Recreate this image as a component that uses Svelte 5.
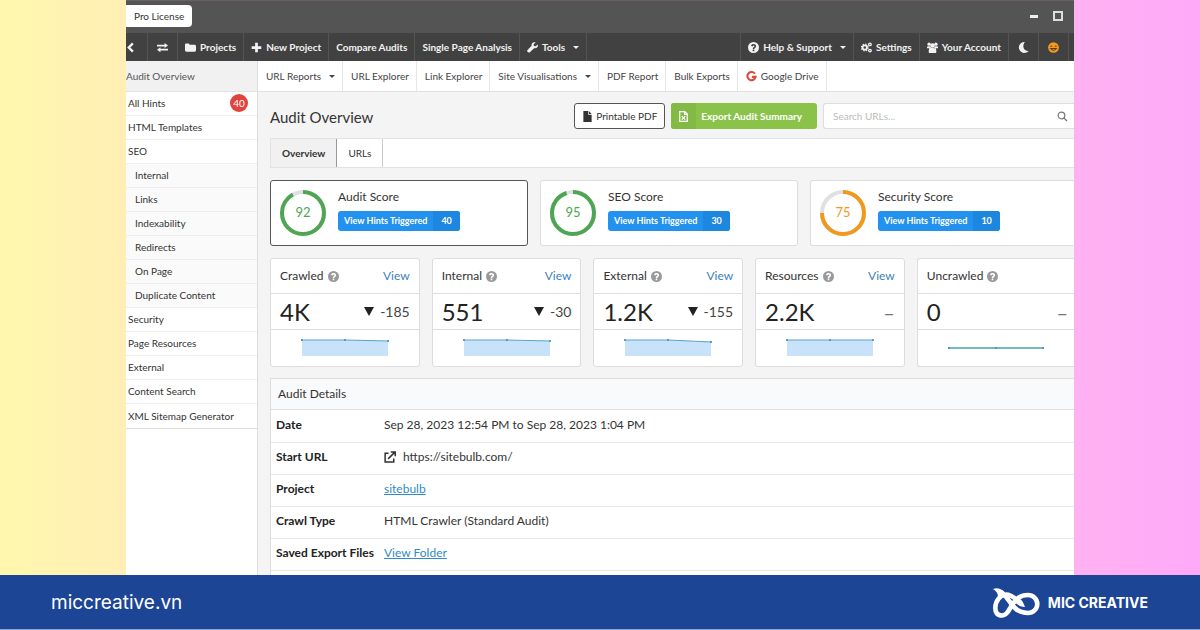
<script lang="ts">
	type Item = { label: string; icon?: string; caret?: boolean };

	const menu: Item[] = [
		{ label: 'Projects', icon: 'folder' },
		{ label: 'New Project', icon: 'plus' },
		{ label: 'Compare Audits' },
		{ label: 'Single Page Analysis' },
		{ label: 'Tools', icon: 'wrench', caret: true }
	];

	const userMenu: Item[] = [
		{ label: 'Help & Support', icon: 'help', caret: true },
		{ label: 'Settings', icon: 'cogs' },
		{ label: 'Your Account', icon: 'users' }
	];

	const reports: Item[] = [
		{ label: 'URL Reports', caret: true },
		{ label: 'URL Explorer' },
		{ label: 'Link Explorer' },
		{ label: 'Site Visualisations', caret: true },
		{ label: 'PDF Report' },
		{ label: 'Bulk Exports' },
		{ label: 'Google Drive', icon: 'google' }
	];

	const sidebar = [
		{ label: 'All Hints', count: 40 },
		{ label: 'HTML Templates' },
		{ label: 'SEO' },
		{ label: 'Internal', sub: true },
		{ label: 'Links', sub: true },
		{ label: 'Indexability', sub: true },
		{ label: 'Redirects', sub: true },
		{ label: 'On Page', sub: true },
		{ label: 'Duplicate Content', sub: true },
		{ label: 'Security' },
		{ label: 'Page Resources' },
		{ label: 'External' },
		{ label: 'Content Search' },
		{ label: 'XML Sitemap Generator' }
	];

	const scores = [
		{ label: 'Audit Score', value: 92, hints: 40, color: '#4fa652' },
		{ label: 'SEO Score', value: 95, hints: 30, color: '#4fa652' },
		{ label: 'Security Score', value: 75, hints: 10, color: '#f0991d' }
	];

	// points are the y positions of the three sparkline samples
	const stats = [
		{ label: 'Crawled', value: '4K', change: '-185', points: [2, 2, 3] },
		{ label: 'Internal', value: '551', change: '-30', points: [2, 2, 3] },
		{ label: 'External', value: '1.2K', change: '-155', points: [2, 2, 4] },
		{ label: 'Resources', value: '2.2K', change: null, points: [2, 2, 2] },
		{ label: 'Uncrawled', value: '0', change: null, points: null }
	];

	let tab = $state('Overview');
	let selected = $state('Audit Score');
	let query = $state('');
</script>

<svelte:head>
	<title>Audit Overview</title>
</svelte:head>

{#snippet icon(name: string)}
	<svg class="icon" viewBox="0 0 16 16" aria-hidden="true">
		{#if name === 'folder'}
			<path d="M0 3.500Q0 2 1.500 2H5q1.500 0 1.500 1.500V4H14q2 0 2 2v6q0 2-2 2H2q-2 0-2-2z" />
		{:else if name === 'plus'}
			<path d="M6 1h4v5h5v4h-5v5H6v-5H1V6h5z" />
		{:else if name === 'wrench'}
			<path d="M15.600 3.500 12.500 6.200 10 5.800 9.700 3.400 12.600.6C9-.8 6 2 6.700 5.600L.8 11.500c-1.800 2 1.200 5.200 3.500 3.300L10.200 9c3.800 1 6.600-2 5.400-5.500z" />
		{:else if name === 'help'}
			<path fill-rule="evenodd" d="M8 0a8 8 0 1 0 0 16A8 8 0 0 0 8 0zM6.800 11h2.400v2.400H6.800zM4.300 5.600C5 2 11.800 2 11.800 6c0 2.500-2.600 2.400-2.600 4.100H6.900c0-3 2.500-2.800 2.500-4 0-1.300-2.300-1.200-2.900.6z" />
		{:else if name === 'cogs'}
			<circle cx="5.500" cy="8" r="3.200" fill="none" stroke="currentColor" stroke-width="2.600" />
			<circle cx="5.500" cy="8" r="4.900" fill="none" stroke="currentColor" stroke-width="1.800" stroke-dasharray="2 1.850" />
			<circle cx="13" cy="3.500" r="1.900" fill="none" stroke="currentColor" stroke-width="1.900" />
			<circle cx="13" cy="12.500" r="1.900" fill="none" stroke="currentColor" stroke-width="1.900" />
		{:else if name === 'users'}
			<circle cx="3" cy="3.200" r="2.400" />
			<circle cx="13" cy="3.200" r="2.400" />
			<circle cx="8" cy="5" r="3.300" />
			<path d="M0 9V7.500Q0 6 1.500 6h3l1.800 3H3zM16 9V7.500Q16 6 14.500 6h-3L9.700 9H13zM2.500 15v-3q0-3.500 3-3.500h5q3 0 3 3.500v3q0 1-1 1h-9q-1 0-1-1z" />
		{:else if name === 'google'}
			<path fill="none" stroke="#e0483e" stroke-width="3" d="M13 4A6 6 0 1 0 14 8.500H8.500" />
		{:else if name === 'moon'}
			<path d="M10 0A8 8 0 1 0 15.500 13C8 14 5.500 6 10 0z" />
		{:else if name === 'smile'}
			<circle cx="8" cy="8" r="7.800" fill="#f39a1f" />
			<path fill="none" stroke="#54402a" stroke-width="1.500" d="M3.500 6.500q1.300-1.500 2.600 0M9.900 6.500q1.300-1.500 2.600 0M3.800 9.500q4.200 5 8.400 0z" />
		{:else if name === 'back'}
			<path fill="none" stroke="currentColor" stroke-width="3.400" d="M10 2 4 8l6 6" />
		{:else if name === 'swap'}
			<path d="M0 4h11V1.500L16 5.200 11 8.800V6.500H0zM16 9.800H5V7.500L0 11.200 5 15v-2.600h11z" />
		{:else if name === 'file'}
			<path d="M2 0h7v5.500h5V16H2zM10 0l4 4.500h-4z" />
		{:else if name === 'excel'}
			<path fill="none" stroke="currentColor" stroke-width="1.800" d="M2.500 1H10l3.500 3.500V15h-11zM9.500 1v4h4M5.500 7.500l5 5M10.500 7.500l-5 5" />
		{:else if name === 'search'}
			<circle cx="6.500" cy="6.500" r="4.800" fill="none" stroke="currentColor" stroke-width="1.800" />
			<path fill="none" stroke="currentColor" stroke-width="2" d="m10 10 4.500 4.500" />
		{:else if name === 'external'}
			<path fill="none" stroke="currentColor" stroke-width="2" d="M6 3H1.500v11.500H13V10M5.500 10.500 14.500 1.500M9 1.200h6V7" />
		{/if}
	</svg>
{/snippet}

<div class="page">
	<div class="window">
		<header class="titlebar">
			<span class="license">Pro License</span>
			<div class="controls">
				<button type="button" aria-label="Minimise"><span class="minimise"></span></button>
				<button type="button" aria-label="Maximise"><span class="maximise"></span></button>
			</div>
		</header>

		<nav class="menubar" aria-label="Main">
			<button type="button" class="back" aria-label="Back">{@render icon('back')}</button>
			<button type="button" class="square" aria-label="Switch audit">{@render icon('swap')}</button>
			{#each menu as item}
				<button type="button">
					{#if item.icon}{@render icon(item.icon)}{/if}
					{item.label}
					{#if item.caret}<span class="caret"></span>{/if}
				</button>
			{/each}
			<span class="spacer"></span>
			{#each userMenu as item}
				<button type="button">
					{#if item.icon}{@render icon(item.icon)}{/if}
					{item.label}
					{#if item.caret}<span class="caret"></span>{/if}
				</button>
			{/each}
			<button type="button" class="square" aria-label="Dark mode">{@render icon('moon')}</button>
			<button type="button" class="square" aria-label="Feedback">{@render icon('smile')}</button>
		</nav>

		<div class="body">
			<aside class="sidebar">
				<a href="#overview" class="current">Audit Overview</a>
				<ul>
					{#each sidebar as item}
						<li class:sub={item.sub}>
							<a href="#{item.label}">{item.label}</a>
							{#if item.count}<span class="badge">{item.count}</span>{/if}
						</li>
					{/each}
				</ul>
			</aside>

			<div class="main">
				<nav class="reports" aria-label="Reports">
					{#each reports as item}
						<a href="#{item.label}">
							{#if item.icon}{@render icon(item.icon)}{/if}
							{item.label}
							{#if item.caret}<span class="caret"></span>{/if}
						</a>
					{/each}
				</nav>

				<main class="content">
					<div class="toolbar">
						<h1>Audit Overview</h1>
						<button type="button" class="btn">{@render icon('file')}Printable PDF</button>
						<button type="button" class="btn export">
							<span class="btn-icon">{@render icon('excel')}</span>
							<span class="btn-label">Export Audit Summary</span>
						</button>
						<label class="search">
							<input type="text" placeholder="Search URLs..." aria-label="Search URLs" bind:value={query} />
							{@render icon('search')}
						</label>
					</div>

					<div class="tabs" role="tablist">
						{#each ['Overview', 'URLs'] as name}
							<button type="button" role="tab" aria-selected={tab === name} class:active={tab === name} onclick={() => (tab = name)}>
								{name}
							</button>
						{/each}
					</div>

					<div class="scores">
						{#each scores as score}
							<section class="score" class:selected={selected === score.label}>
								<svg class="ring" viewBox="0 0 48 48" role="img" aria-label="{score.label} {score.value}">
									<circle cx="24" cy="24" r="21" fill="none" stroke="#e0e0e0" stroke-width="4" />
									<circle
										cx="24"
										cy="24"
										r="21"
										fill="none"
										stroke={score.color}
										stroke-width="4"
										pathLength="100"
										stroke-dasharray="{score.value} 100"
										transform="rotate(-90 24 24)"
									/>
									<text x="24" y="28" text-anchor="middle" fill={score.color}>{score.value}</text>
								</svg>
								<div class="score-text">
									<h2>{score.label}</h2>
									<button type="button" class="hints" onclick={() => (selected = score.label)}>
										<span>View Hints Triggered</span><span class="count">{score.hints}</span>
									</button>
								</div>
							</section>
						{/each}
					</div>

					<div class="stats">
						{#each stats as stat}
							<section class="stat">
								<div class="stat-head">
									<h3>{stat.label}</h3>
									{@render icon('help')}
									{#if stat.points}<a href="#{stat.label}">View</a>{/if}
								</div>
								<div class="stat-value">
									<strong>{stat.value}</strong>
									{#if stat.change}
										<span class="change"><span class="down"></span>{stat.change}</span>
									{:else}
										<span class="change none">–</span>
									{/if}
								</div>
								<div class="chart">
									{#if stat.points}
										{@const [a, b, c] = stat.points}
										<svg width="90" height="20" viewBox="0 0 90 20" aria-hidden="true">
											<path fill="#c8e2fa" d="M2 {a}L45 {b}L88 {c}V18H2z" />
											<path fill="none" stroke="#5aa2cf" d="M1 {a}L45 {b}L89 {c}" />
											<circle cx="2" cy={a} r="1" /><circle cx="45" cy={b} r="1" /><circle cx="88" cy={c} r="1" />
										</svg>
									{:else}
										<svg width="96" height="20" viewBox="0 0 96 20" aria-hidden="true">
											<path fill="none" stroke="#45a3b5" stroke-width="1.500" d="M0 10H96" />
											<circle cx="1" cy="10" r="1" /><circle cx="48" cy="10" r="1" /><circle cx="95" cy="10" r="1" />
										</svg>
									{/if}
								</div>
							</section>
						{/each}
					</div>

					<section class="details">
						<h2>Audit Details</h2>
						<table>
							<tbody>
								<tr><th scope="row">Date</th><td>Sep 28, 2023 12:54 PM to Sep 28, 2023 1:04 PM</td></tr>
								<tr>
									<th scope="row">Start URL</th>
									<td><span class="url">{@render icon('external')}https://sitebulb.com/</span></td>
								</tr>
								<tr><th scope="row">Project</th><td><a href="#project">sitebulb</a></td></tr>
								<tr><th scope="row">Crawl Type</th><td>HTML Crawler (Standard Audit)</td></tr>
								<tr><th scope="row">Saved Export Files</th><td><a href="#folder">View Folder</a></td></tr>
							</tbody>
						</table>
					</section>
				</main>
			</div>
		</div>
	</div>

	<footer class="footer">
		<a href="#site">miccreative.vn</a>
		<div class="brand">
			<svg viewBox="0 0 48 32" aria-hidden="true">
				<path
					fill="none"
					stroke="currentColor"
					stroke-width="4.600"
					d="M9 5C14 8 17 15 23 21C27 25 31 26 36 26C41 26 45.300 22 45.300 17C45.300 12 41 8 36 8C28 8 24 12 20 18C16 25 14 28.500 10 28.500C5 28.500 3.300 25 3.300 21C3.300 14 8 8 14 7.500C21 7.500 24 13 29 16.500"
				/>
				<path fill="currentColor" d="M1 2C6 0 11 2 13 7L6 10C6 6 4 4 1 2zM25 10C29 12 31 14 33 20C28 20 25 18 22 14z" />
			</svg>
			<strong>MIC CREATIVE</strong>
		</div>
	</footer>
</div>

<style>
	:global(body) {
		margin: 0;
	}

	.page {
		min-height: 100vh;
		display: flex;
		flex-direction: column;
		background: linear-gradient(90deg, #fff7ad, #ffa9f9);
		font-family: Lato, sans-serif;
		font-size: 10px;
		line-height: 16px;
		color: #333;
	}

	.page :global(*) {
		box-sizing: border-box;
	}

	button,
	input {
		font: inherit;
		color: inherit;
		margin: 0;
		padding: 0;
		border: 0;
		background: none;
	}

	button {
		cursor: pointer;
		white-space: nowrap;
	}

	a {
		color: inherit;
		text-decoration: none;
	}

	h1,
	h2,
	h3 {
		margin: 0;
		font-weight: 400;
	}

	.icon {
		width: 11px;
		height: 11px;
		flex: none;
		fill: currentColor;
	}

	.caret {
		margin-left: 4px;
		border: 3px solid transparent;
		border-top-color: currentColor;
		border-bottom: 0;
	}

	.window {
		flex: 1;
		display: flex;
		flex-direction: column;
		margin: 0 126px;
		background: #f4f4f4;
		overflow: hidden;
	}

	.titlebar {
		height: 33px;
		display: flex;
		align-items: center;
		justify-content: space-between;
		padding-bottom: 2px;
		background: #545454;
		border-top: 1px solid #6b6062;
	}

	.license {
		padding: 3px 8px;
		background: #fff;
		border-radius: 0 4px 4px 0;
	}

	.controls {
		display: flex;
		padding-right: 4px;
	}

	.controls button {
		width: 24px;
		height: 20px;
		display: grid;
		place-items: center;
	}

	.minimise {
		width: 8px;
		height: 3px;
		background: #eee;
	}

	.maximise {
		width: 10px;
		height: 10px;
		border: 2px solid #ddd;
	}

	.menubar {
		height: 28px;
		display: flex;
		padding-right: 5px;
		background: #414141;
		color: #f2f2f2;
		font-weight: 700;
	}

	.menubar button {
		display: flex;
		align-items: center;
		gap: 4px;
		padding: 0 7px;
		border-right: 1px solid #545454;
	}

	.menubar .back {
		padding: 0 10px 0 0;
	}

	.menubar .square {
		padding: 0 9px;
	}

	.spacer {
		flex: 1;
		border-right: 1px solid #545454;
	}

	.body {
		flex: 1;
		display: flex;
	}

	.sidebar {
		width: 132px;
		flex: none;
		background: #fff;
		border-right: 1px solid #ddd;
	}

	.current {
		height: 31px;
		display: flex;
		align-items: center;
		background: #f1f1f1;
		border-bottom: 1px solid #e2e2e2;
		color: #555;
	}

	.sidebar ul {
		margin: 0;
		padding: 0;
		list-style: none;
		border-bottom: 1px solid #ddd;
	}

	.sidebar li {
		height: 24px;
		display: flex;
		align-items: center;
		justify-content: space-between;
		padding: 0 9px 1px 2px;
		border-bottom: 1px solid #eee;
	}

	.sidebar li:last-child {
		border-bottom: 0;
	}

	.sidebar .sub {
		padding-left: 9px;
		background: #fafafa;
	}

	.badge {
		width: 18px;
		border-radius: 9px;
		background: #e0443c;
		color: #fff;
		line-height: 18px;
		text-align: center;
	}

	.main {
		flex: 1;
		min-width: 0;
		display: flex;
		flex-direction: column;
	}

	.reports {
		height: 31px;
		display: flex;
		background: #fff;
		border-bottom: 1px solid #e2e2e2;
		color: #444;
	}

	.reports a {
		display: flex;
		align-items: center;
		gap: 4px;
		padding: 0 7px 0 8px;
		border-right: 1px solid #e8e8e8;
		white-space: nowrap;
	}

	.content {
		flex: 1;
		display: flex;
		flex-direction: column;
		padding: 11px 0 0 12px;
	}

	.toolbar {
		display: flex;
		align-items: center;
		gap: 6px;
		margin-bottom: 9px;
	}

	h1 {
		flex: 1;
		padding-top: 2px;
		font-size: 15px;
		line-height: 20px;
	}

	.btn {
		height: 26px;
		display: flex;
		align-items: center;
		gap: 3px;
		padding: 0 7px;
		border: 1px solid #555;
		border-radius: 3px;
		background: #fff;
	}

	.export {
		gap: 0;
		padding: 0;
		overflow: hidden;
		border: 0;
		background: #8bc34a;
		color: #fff;
		font-weight: 700;
	}

	.btn-icon {
		height: 26px;
		display: flex;
		align-items: center;
		padding: 0 7px;
		background: #83ba45;
	}

	.btn-label {
		padding: 0 15px 0 5px;
	}

	.search {
		width: 251px;
		height: 26px;
		display: flex;
		align-items: center;
		padding: 0 6px 0 9px;
		border: 1px solid #ddd;
		border-right: 0;
		border-radius: 3px 0 0 3px;
		background: #fff;
		color: #777;
	}

	.search input {
		flex: 1;
		min-width: 0;
		outline: none;
	}

	.search input::placeholder {
		color: #bbb;
		opacity: 1;
	}

	.tabs {
		height: 30px;
		display: flex;
		margin-bottom: 12px;
		border: 1px solid #e2e2e2;
		border-right: 0;
		background: #fff;
	}

	.tabs button {
		padding: 0 11px;
		border-right: 1px solid #ccc;
	}

	.tabs .active {
		background: #f1f1f1;
		border-color: #999;
		font-weight: 700;
	}

	/* the last card in each row runs on to the window edge */
	.scores {
		display: grid;
		grid-template-columns: 43fr 43fr 44fr;
		gap: 12px;
		margin-bottom: 12px;
	}

	.score {
		height: 66px;
		display: flex;
		align-items: flex-start;
		gap: 11px;
		padding: 8px;
		border: 1px solid #ddd;
		border-radius: 3px;
		background: #fff;
	}

	.selected {
		border-color: #555;
	}

	.score:last-child,
	.stat:last-child {
		border-right: 0;
		border-radius: 3px 0 0 3px;
	}

	.ring {
		width: 48px;
		height: 48px;
		flex: none;
		font-size: 13px;
	}

	.score h2 {
		margin-bottom: 6px;
		font-size: 12px;
	}

	.hints {
		display: flex;
		overflow: hidden;
		border-radius: 3px;
		background: #2391ee;
		color: #fff;
		font-size: 9px;
		font-weight: 700;
		line-height: 20px;
	}

	.hints span {
		padding: 0 6px;
	}

	.hints .count {
		padding: 0 8px;
		background: #1d86df;
	}

	.stats {
		display: grid;
		grid-template-columns: repeat(4, 20fr) 21fr;
		gap: 12px;
		margin-bottom: 11px;
	}

	.stat {
		border: 1px solid #ddd;
		border-radius: 3px;
		background: #fff;
	}

	.stat-head,
	.stat-value {
		display: flex;
		align-items: center;
		padding: 0 9px;
		border-bottom: 1px solid #ddd;
	}

	.stat-head {
		height: 35px;
		gap: 4px;
		color: #999;
	}

	.stat h3 {
		font-size: 12px;
		color: #333;
	}

	.stat-head a {
		margin-left: auto;
		font-size: 12px;
		color: #3b82bd;
	}

	.stat-value {
		height: 36px;
		justify-content: space-between;
	}

	.stat:last-child .stat-value {
		padding-right: 6px;
	}

	.stat-value strong {
		font-size: 24px;
		font-weight: 400;
		line-height: 32px;
		color: #222;
	}

	.change {
		display: flex;
		align-items: center;
		gap: 6px;
		font-size: 14px;
		color: #444;
	}

	.none {
		font-size: 20px;
		color: #777;
	}

	.down {
		border: 5px solid transparent;
		border-top: 9px solid #222;
		border-bottom: 0;
	}

	.chart {
		height: 36px;
		display: grid;
		place-items: center;
	}

	.chart circle {
		fill: #4c8aae;
	}

	.details {
		flex: 1;
		border: 1px solid #ddd;
		border-width: 1px 0 0 1px;
		background: #fff;
		font-size: 12px;
	}

	.details h2 {
		padding: 0 7px;
		font-size: 12px;
		line-height: 30px;
		background: #f9fafb;
		border-bottom: 1px solid #ddd;
	}

	table {
		width: 100%;
		border-collapse: collapse;
	}

	th,
	td {
		height: 32px;
		padding: 0 5px 2px 5px;
		border-bottom: 1px solid #e8e8e8;
		text-align: left;
	}

	th {
		width: 113px;
		font-weight: 700;
		color: #222;
		white-space: nowrap;
	}

	td {
		padding-left: 0;
	}

	td a {
		color: #2f8cc0;
		text-decoration: underline;
	}

	.url {
		display: flex;
		align-items: center;
		gap: 7px;
	}

	.url .icon {
		width: 12px;
		height: 12px;
	}

	.footer {
		height: 55px;
		display: flex;
		align-items: center;
		justify-content: space-between;
		padding: 1px 52px 0 51px;
		background: #1c4595;
		border-bottom: 1px solid #8fa3ca;
		color: #fff;
	}

	.footer a {
		font-family: Inter, sans-serif;
		font-size: 19px;
	}

	.brand {
		display: flex;
		align-items: center;
		gap: 8px;
		font-family: Inter, sans-serif;
		font-size: 14px;
	}

	.brand svg {
		width: 48px;
		height: 32px;
	}

	.brand strong {
		font-weight: 700;
	}
</style>
